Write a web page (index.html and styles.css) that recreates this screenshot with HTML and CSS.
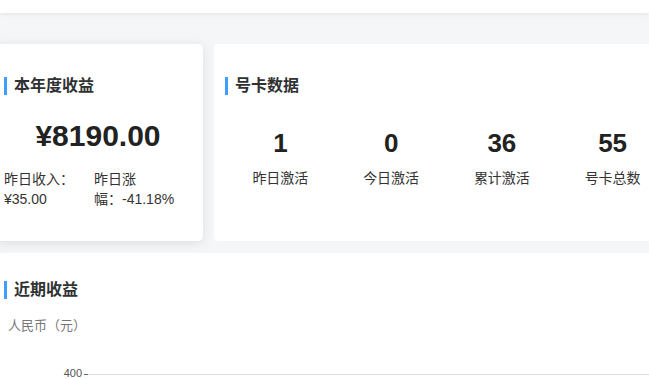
FILE: index.html
```html
<!DOCTYPE html>
<html lang="zh-CN">
<head>
    <meta charset="UTF-8">
    <meta name="viewport" content="width=device-width, initial-scale=1.0">
    <title>收益概览</title>
    <link rel="stylesheet" href="styles.css">
</head>
<body>
    <div class="topbar"></div>
    <div class="page">
        <div class="cards">
            <div class="card card-year">
                <h3 class="block-title">本年度收益</h3>
                <div class="year-total">¥8190.00</div>
                <div class="year-stats">
                    <div class="year-stat">昨日收入：¥35.00</div>
                    <div class="year-stat">昨日涨<span class="keep">幅：-41.18%</span></div>
                </div>
            </div>
            <div class="card card-sim">
                <h3 class="block-title">号卡数据</h3>
                <div class="sim-stats">
                    <div class="sim-item">
                        <div class="sim-num">1</div>
                        <div class="sim-label">昨日激活</div>
                    </div>
                    <div class="sim-item">
                        <div class="sim-num">0</div>
                        <div class="sim-label">今日激活</div>
                    </div>
                    <div class="sim-item">
                        <div class="sim-num">36</div>
                        <div class="sim-label">累计激活</div>
                    </div>
                    <div class="sim-item">
                        <div class="sim-num">55</div>
                        <div class="sim-label">号卡总数</div>
                    </div>
                </div>
            </div>
        </div>
        <div class="panel">
            <h3 class="block-title">近期收益</h3>
            <div class="chart-unit">人民币（元）</div>
            <svg class="chart" width="680" height="50" viewBox="0 0 680 50">
                <text x="78" y="41" text-anchor="end" class="axis-text">400</text>
                <line x1="80" y1="38.5" x2="84" y2="38.5" stroke="#666" stroke-width="1"/>
                <line x1="84" y1="38.5" x2="680" y2="38.5" stroke="#e0e0e0" stroke-width="1"/>
            </svg>
        </div>
    </div>
</body>
</html>
```

FILE: styles.css
```css
body {
    margin: 0;
    font-family: "Liberation Sans", Arial, "Noto Sans CJK SC", sans-serif;
    background-color: #f5f6f7;
    color: #303133;
    overflow: hidden;
}
.topbar {
    height: 13px;
    background: #fff;
    box-shadow: 0 1px 4px rgba(0, 0, 0, 0.08);
    position: relative;
}
.page {
    width: 686px;
    margin-left: -7px;
    padding-top: 31px;
}
.cards {
    display: flex;
    gap: 11px;
    margin-bottom: 12px;
}
.card {
    box-sizing: border-box;
    height: 197px;
    background: #fff;
    border-radius: 5px;
    padding: 33px 11px 0;
}
.card-year {
    width: 210px;
    box-shadow: 0 2px 12px rgba(0, 0, 0, 0.1);
}
.card-sim {
    width: 465px;
}
.block-title {
    margin: 0;
    font-size: 16px;
    line-height: 18px;
    font-weight: bold;
    color: #303133;
    border-left: 3px solid #409eff;
    padding-left: 7px;
}
.year-total {
    margin-top: 23px;
    text-align: center;
    font-size: 30px;
    line-height: 36px;
    font-weight: bold;
    color: #222;
}
.year-stats {
    display: flex;
    margin-top: 15px;
}
.year-stat {
    width: 90px;
    font-size: 14px;
    line-height: 20px;
    color: #333;
}
.keep {
    white-space: nowrap;
}
.sim-stats {
    display: flex;
    margin-top: 33px;
}
.sim-item {
    flex: 1;
    text-align: center;
}
.sim-num {
    font-size: 26px;
    line-height: 30px;
    font-weight: bold;
    color: #222;
}
.sim-label {
    margin-top: 10px;
    font-size: 14px;
    line-height: 20px;
    color: #333;
}
.panel {
    background: #fff;
    padding: 28px 11px 0;
    height: 200px;
}
.chart-unit {
    margin-top: 17px;
    padding-left: 4px;
    font-size: 13px;
    line-height: 20px;
    color: #777;
}
.chart {
    display: block;
}
.axis-text {
    font-family: "Liberation Sans", Arial, sans-serif;
    font-size: 11px;
    fill: #555;
}
```
